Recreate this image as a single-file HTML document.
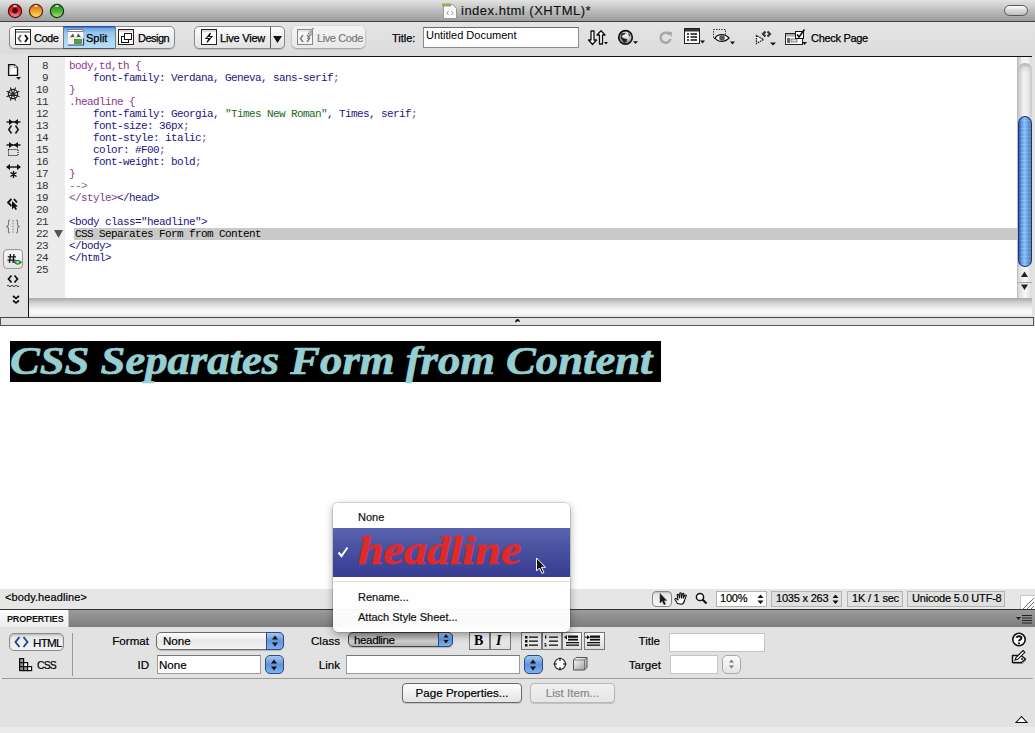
<!DOCTYPE html>
<html><head><meta charset="utf-8">
<style>
*{box-sizing:border-box;margin:0;padding:0}
html,body{width:1035px;height:733px;overflow:hidden;background:#e3e3e3;font-family:"Liberation Sans",sans-serif;font-size:11px;color:#000}
.a{position:absolute}
.pl{font-size:11.6px;line-height:14px;white-space:nowrap;-webkit-text-stroke:0.2px currentColor}
.sel{border:1px solid #6a6a6a;border-radius:5px;background:linear-gradient(#fdfdfd,#e8e8e8 50%,#f4f4f4);box-shadow:0 1px 1px rgba(0,0,0,.2)}
.selb{border:1px solid #2c4a8a;background:linear-gradient(#a8c8f0,#5f95dc 50%,#7eb0ec)}
.inp{background:#fff;border:1px solid #9a9a9a;border-top-color:#777}
.btn{border:1px solid #7a7a7a;background:linear-gradient(#fafafa,#dedede)}
.btn2{border:1px solid #6a6a6a;border-radius:4px;background:linear-gradient(#fff,#f0f0f0 50%,#e4e4e4);box-shadow:0 1px 1px rgba(0,0,0,.15)}
.sbox{white-space:nowrap;height:16px;border:1px solid #b4b4b4;background:#e0e0e0;font-size:11px;line-height:14px;-webkit-text-stroke:0.2px #000;letter-spacing:-0.2px}
#titlebar{left:0;top:0;width:1035px;height:22px;background:linear-gradient(#e2e2e2,#cacaca 35%,#b0b0b0 70%,#9c9c9c);border-bottom:1px solid #404040}
.light{top:4px;width:14px;height:14px;border-radius:50%}
#toolbar{left:0;top:22px;width:1035px;height:34px;background:linear-gradient(#e4e4e4,#dcdcdc)}
#codeframe{left:28px;top:56px;width:1005px;height:261px;border:1px solid #111;border-width:1px 0 0 1px;background:#fff}
.seg{border:1px solid #8a8a8a;border-radius:5px;background:linear-gradient(#fdfdfd,#f0f0f0 45%,#e2e2e2);box-shadow:0 1px 1px rgba(0,0,0,.15)}
.tbt{font-size:11px;line-height:14px;white-space:nowrap;-webkit-text-stroke:0.25px #000}
#leftcol{left:0;top:54px;width:28px;height:263px;background:#e2e2e2}
#gutter{left:29px;top:57px;width:36px;height:241px;background:#ececec}
.p{color:#8b3a8b}.n{color:#1e1480}.g{color:#1a6a1a}.c{color:#777}
.code{font-family:"Liberation Mono",monospace;font-size:11px;letter-spacing:-0.6px;line-height:12px;white-space:pre}
#splitter{left:0;top:317px;width:1034px;height:9px;background:#e2e2e2;border:1px solid #555;border-top-color:#444}
#design{left:0;top:326px;width:1035px;height:263px;background:#fff}
#status{left:0;top:589px;width:1035px;height:21px;background:#e6e6e6;border-bottom:1px solid #333}
#prophdr{left:0;top:610px;width:1035px;height:17px;background:linear-gradient(#9c9c9c,#7c7c7c)}
#props{left:0;top:627px;width:1035px;height:106px;background:#e2e2e2}
</style></head><body>
<div id="titlebar" class="a"></div>
<svg class="a" style="left:7px;top:3px" width="60" height="16"><defs>
<linearGradient id="rg" x1="0" y1="0" x2="0" y2="1"><stop offset="0" stop-color="#d80c14"/><stop offset=".55" stop-color="#e8303a"/><stop offset="1" stop-color="#f89aa0"/></linearGradient>
<linearGradient id="og" x1="0" y1="0" x2="0" y2="1"><stop offset="0" stop-color="#d8600c"/><stop offset=".5" stop-color="#f0a030"/><stop offset="1" stop-color="#fae860"/></linearGradient>
<linearGradient id="gg" x1="0" y1="0" x2="0" y2="1"><stop offset="0" stop-color="#2a8c1c"/><stop offset=".5" stop-color="#4cb03a"/><stop offset="1" stop-color="#b0e080"/></linearGradient>
</defs>
<circle cx="8" cy="8" r="6.6" fill="url(#rg)" stroke="#4a0a0a" stroke-width="1.2"/><circle cx="8" cy="7.6" r="2.8" fill="#3a1616"/><ellipse cx="8" cy="3" rx="2" ry="1" fill="#fff" opacity=".7"/>
<circle cx="29" cy="8" r="6.6" fill="url(#og)" stroke="#5a2a06" stroke-width="1.2"/><ellipse cx="29" cy="3" rx="2" ry="1" fill="#fff" opacity=".7"/>
<circle cx="50" cy="8" r="6.6" fill="url(#gg)" stroke="#0e360e" stroke-width="1.2"/><ellipse cx="50" cy="3" rx="2" ry="1" fill="#fff" opacity=".7"/>
</svg>
<div class="a" style="left:461px;top:2px;font-size:13px;line-height:18px;color:#111;letter-spacing:0.5px;-webkit-text-stroke:0.15px #111">index.html (XHTML)*</div>

<div id="toolbar" class="a"></div>

<!-- segmented view control -->
<div class="a seg" style="left:9px;top:26px;width:166px;height:23px"></div>
<div class="a" style="left:63px;top:26px;width:52px;height:23px;background:linear-gradient(#2a4aa8 0,#2a4aa8 1px,#68a4e4 2px,#94c6ee 30%,#acd8f2 70%,#b4e0f4);border-bottom:1px solid #555"></div>
<svg class="a" style="left:15px;top:29px" width="17" height="17"><rect x="1" y="1" width="15" height="15" fill="#aaa" opacity=".5"/><rect x="0.5" y="0.5" width="15" height="15" fill="#fff" stroke="#222"/><rect x="1" y="1" width="14" height="2" fill="#fff"/><rect x="1" y="2.5" width="14" height="1" fill="#444"/><path d="M6 6L3.5 9.5L6 13" fill="none" stroke="#666" stroke-width="1.9"/><path d="M10 6L12.5 9.5L10 13" fill="none" stroke="#111" stroke-width="1.9"/></svg>
<div class="a tbt" style="left:34px;top:31px;letter-spacing:-0.5px">Code</div>
<svg class="a" style="left:67px;top:29px" width="18" height="17"><rect x="1" y="0.5" width="15" height="15.5" fill="#fff"/><rect x="1" y="0.5" width="15" height="2" fill="#fff" stroke="#666" stroke-width=".8"/><path d="M3 8L6 4.5L7.5 8ZM9.5 8L11 4.5L14 8Z" fill="#555"/><rect x="0" y="8.3" width="17" height="1.2" fill="#e8d8a8"/><rect x="1" y="9.5" width="15" height="6" fill="#f4f4f4"/><rect x="7.5" y="10.5" width="7" height="4" fill="#48a838" stroke="#2a6a20" stroke-width=".6"/><path d="M1 16H16.5V9.5" fill="none" stroke="#2a3a8a" stroke-width="1.2"/></svg>
<div class="a tbt" style="left:86px;top:31px">Split</div>
<svg class="a" style="left:118px;top:29px" width="17" height="17"><rect x="0.5" y="0.5" width="15" height="15" fill="#fff" stroke="#222"/><rect x="1" y="1" width="14" height="2" fill="#ddd"/><rect x="3.5" y="7.5" width="7" height="6" fill="#fff" stroke="#111"/><rect x="6.5" y="4.5" width="7" height="6" fill="#fff" stroke="#111"/></svg>
<div class="a tbt" style="left:138px;top:31px;letter-spacing:-0.5px">Design</div>
<div class="a" style="left:63px;top:27px;width:1px;height:21px;background:#777"></div>
<div class="a" style="left:115px;top:27px;width:1px;height:21px;background:#777"></div>

<!-- live view -->
<div class="a seg" style="left:194px;top:26px;width:91px;height:23px"></div>
<div class="a" style="left:270px;top:27px;width:1px;height:21px;background:#555"></div>
<svg class="a" style="left:201px;top:29px" width="17" height="17"><rect x="0.5" y="0.5" width="15" height="15" fill="#fff" stroke="#222"/><rect x="1" y="1" width="14" height="2" fill="#ddd"/><path d="M9.5 4L5 9.5H8L6 13.5L11 7.5H8Z" fill="none" stroke="#111" stroke-width="1.1"/></svg>
<div class="a tbt" style="left:220px;top:31px;letter-spacing:-0.2px">Live View</div>
<svg class="a" style="left:273px;top:36px" width="9" height="7"><path d="M0 0H9L4.5 7Z" fill="#111"/></svg>
<!-- live code disabled -->
<div class="a" style="left:292px;top:26px;width:73px;height:22px;border-radius:5px;background:linear-gradient(#f4f4f4,#e8e8e8);box-shadow:0 1px 2px rgba(0,0,0,.3),0 0 1px rgba(0,0,0,.2)"></div>
<svg class="a" style="left:297px;top:28px" width="20" height="18" opacity="0.5"><rect x="0.5" y="1.5" width="15" height="15" fill="#fff" stroke="#222"/><rect x="1" y="2" width="14" height="2" fill="#ddd"/><path d="M6 7L3.5 10.5L6 14M10 7L12.5 10.5L10 14" fill="none" stroke="#111" stroke-width="1.5"/><path d="M15 0.5L11 6H13.5L10.5 11L16 5H13.5L16.5 0.5Z" fill="#fff" stroke="#111" stroke-width=".9"/></svg>
<div class="a tbt" style="left:317px;top:31px;color:#7a7a7a;-webkit-text-stroke:0.2px #7a7a7a;letter-spacing:-0.4px">Live Code</div>

<div class="a tbt" style="left:392px;top:31px">Title:</div>
<div class="a" style="left:423px;top:27px;width:156px;height:21px;background:#fff;border:1px solid #8c8c8c;border-top-color:#6a6a6a"></div>
<div class="a" style="left:426px;top:28px;font-size:11px;line-height:14px">Untitled Document</div>
<div class="a tbt" style="left:811px;top:31px;letter-spacing:-0.3px">Check Page</div>

<!-- toolbar icons -->
<svg class="a" style="left:587px;top:30px" width="22" height="16"><path d="M4 1V10H1.5L5.5 14.5L9.5 10H7V1Z" fill="#fff" stroke="#111" stroke-width="1.3" stroke-linejoin="round"/><path d="M12.5 14V5H10L14 0.8L18 5H15.5V14Z" fill="#fff" stroke="#111" stroke-width="1.3" stroke-linejoin="round"/><path d="M17 12H21L19 14.5Z" fill="#111"/></svg>
<svg class="a" style="left:617px;top:29px" width="23" height="18"><defs><radialGradient id="gl" cx="55%" cy="35%" r="65%"><stop offset="0" stop-color="#fff"/><stop offset=".6" stop-color="#bbb"/><stop offset="1" stop-color="#666"/></radialGradient></defs><circle cx="8.5" cy="8.4" r="6.8" fill="url(#gl)" stroke="#111" stroke-width="1.6"/><path d="M4 4.5L9 3.8L7.5 5.5L5.5 6L4.5 8L7 9.5L10 10L9.5 13L7 14L5.5 11.5L3.5 9Z" fill="#222"/><path d="M11 4L13.5 5.5L12.5 8L11.5 6Z" fill="#555"/><path d="M16 12.2H21L18.5 15Z" fill="#111"/></svg>
<svg class="a" style="left:658px;top:30px" width="16" height="15"><path d="M11.5 4.5A5 5 0 1 0 12.5 9" fill="none" stroke="#a8a8a8" stroke-width="2.6"/><path d="M9 1.5L14 2L13.5 7Z" fill="#a8a8a8"/></svg>
<svg class="a" style="left:684px;top:28px" width="22" height="17"><rect x="0.5" y="0.5" width="15" height="15" fill="#fff" stroke="#222"/><rect x="1" y="1" width="14" height="2.5" fill="#333"/><path d="M3 6H5M3 9H5M3 12H5M6.5 6H13M6.5 9H13M6.5 12H13" stroke="#111" stroke-width="1.4"/><path d="M16 12.5H21L18.5 15.5Z" fill="#111"/></svg>
<svg class="a" style="left:713px;top:29px" width="23" height="17"><rect x="0.5" y="0.5" width="12" height="9" fill="none" stroke="#222" stroke-dasharray="1.3 1.3"/><path d="M2 9C5 4.5 12 4.5 16 9C12 13.5 5 13.5 2 9Z" fill="#fff" stroke="#111" stroke-width="1.3"/><circle cx="9" cy="9" r="2.8" fill="#555"/><path d="M17 12.5H22L19.5 15.5Z" fill="#111"/></svg>
<svg class="a" style="left:755px;top:30px" width="22" height="17"><path d="M1.5 5.5V13.5L8.5 9.5Z" fill="#f4f4f4" stroke="#222" stroke-width="1.3" stroke-dasharray="1.6 .8"/><path d="M10.5 1.5L8 4L10.5 6.5M12.5 1.5L15 4L12.5 6.5" fill="none" stroke="#333" stroke-width="2.1"/><path d="M15 12.5H21L18 15.5Z" fill="#111"/></svg>
<svg class="a" style="left:785px;top:29px" width="23" height="17"><rect x="0.5" y="4.5" width="17" height="11" fill="#fff" stroke="#222"/><rect x="1" y="5" width="16" height="2.5" fill="#aaa"/><rect x="2" y="9" width="3" height="5" fill="#666"/><rect x="6" y="10" width="6" height="3" fill="#ddd" stroke="#444" stroke-width=".6"/><rect x="10.5" y="2.5" width="8" height="7" fill="#fff" stroke="#111"/><path d="M12 5.5L14 8L19.5 0.5" fill="none" stroke="#111" stroke-width="1.6"/><path d="M17 13H22L19.5 16Z" fill="#111"/></svg>
<!-- title bar widget -->
<div class="a" style="left:1004px;top:5px;width:24px;height:11px;border-radius:6px;border:1.5px solid #555;background:linear-gradient(#ffffff,#d8d8d8 50%,#bdbdbd)"></div>
<!-- doc icon in title -->
<svg class="a" style="left:442px;top:2px" width="16" height="17"><path d="M1.5 2.5H10.5L14.5 6.5V16.5H1.5Z" fill="#fafafa" stroke="#999"/><rect x="0" y="1.5" width="9" height="3" fill="#8fb060"/><path d="M6.5 9L5 11L6.5 13M9.5 9L11 11L9.5 13" fill="none" stroke="#999"/></svg>
<div id="leftcol" class="a"></div>
<div id="codeframe" class="a"></div>
<div id="gutter" class="a"></div>

<div class="a" style="left:74px;top:228px;width:943px;height:12px;background:#c9c9c9"></div>
<div class="a code" style="left:28px;top:60px;width:20px;text-align:right;color:#333">8
9
10
11
12
13
14
15
16
17
18
19
20
21
22
23
24
25</div>
<div class="a code" style="left:69px;top:60px;color:#000"><span class="p">body,td,th {</span>
    <span class="n">font-family: Verdana, Geneva, sans-serif</span><span class="p">;</span>
<span class="p">}</span>
<span class="p">.headline {</span>
    <span class="n">font-family: Georgia, </span><span class="g">"Times New Roman"</span><span class="n">, Times, serif</span><span class="p">;</span>
    <span class="n">font-size: 36px</span><span class="p">;</span>
    <span class="n">font-style: italic</span><span class="p">;</span>
    <span class="n">color: #F00</span><span class="p">;</span>
    <span class="n">font-weight: bold</span><span class="p">;</span>
<span class="p">}</span>
<span class="c">--&gt;</span>
<span class="p">&lt;/style&gt;</span><span class="n">&lt;/head&gt;</span>

<span class="n">&lt;body class="headline"&gt;</span>
 CSS Separates Form from Content
<span class="n">&lt;/body&gt;</span>
<span class="n">&lt;/html&gt;</span>
</div>
<svg class="a" style="left:54px;top:230px" width="9" height="8"><path d="M0 0H9L4.5 8Z" fill="#555"/></svg>

<!-- left column icons -->
<svg class="a" style="left:7px;top:63px" width="16" height="18"><defs><linearGradient id="dg" x1="0" y1="0" x2="1" y2="1"><stop offset="0" stop-color="#bbb"/><stop offset=".5" stop-color="#fff"/></linearGradient></defs><path d="M1.6 1.6H7.5L10.5 4.6V12.4H1.6Z" fill="url(#dg)" stroke="#111" stroke-width="1.3"/><path d="M7.5 1.6L10.5 4.6H7.5Z" fill="#fff" stroke="#333" stroke-width=".6"/><path d="M9 14H14L11.5 16.8Z" fill="#111"/></svg>
<svg class="a" style="left:5px;top:86px" width="16" height="16"><circle cx="8" cy="8" r="4.6" fill="#f4f4f4" stroke="#222" stroke-width="1.3"/><path d="M8 8L14.47 10.68M8 8L10.68 14.47M8 8L5.32 14.47M8 8L1.53 10.68M8 8L1.53 5.32M8 8L5.32 1.53M8 8L10.68 1.53M8 8L14.47 5.32" stroke="#222" stroke-width="1.1"/><circle cx="8" cy="8" r="1.6" fill="#333"/></svg>
<svg class="a" style="left:6px;top:119px" width="15" height="16"><path d="M0.5 3H14.5" stroke="#111" stroke-width="1.4"/><path d="M3 0L7.3 3L3 6ZM12 0L7.7 3L12 6Z" fill="#111"/><path d="M5.5 6.5L2.8 10.5L5.5 14.5M9.5 6.5L12.2 10.5L9.5 14.5" fill="none" stroke="#222" stroke-width="1.7"/></svg>
<svg class="a" style="left:6px;top:142px" width="15" height="15"><path d="M0.5 3H14.5" stroke="#111" stroke-width="1.4"/><path d="M3 0L7.3 3L3 6ZM12 0L7.7 3L12 6Z" fill="#111"/><rect x="2.5" y="7.5" width="9.5" height="6" fill="none" stroke="#111" stroke-width="1.1" stroke-dasharray="1.1 .9"/></svg>
<svg class="a" style="left:6px;top:164px" width="15" height="14"><path d="M1 3H14" stroke="#111" stroke-width="1.4"/><path d="M0 3L4 0V6ZM15 3L11 0V6Z" fill="#111"/><path d="M7.5 7V14M4.5 8.5L10.5 12.5M10.5 8.5L4.5 12.5" stroke="#111" stroke-width="1.4"/></svg>
<svg class="a" style="left:7px;top:198px" width="12" height="12"><path d="M4.5 1L1 4.5L4.5 8M7 1L10 4.5" fill="none" stroke="#111" stroke-width="1.8"/><path d="M5 3L5 11.5L7 9.5L8.5 12L10 11.3L8.5 8.8L11 8.5Z" fill="#111"/></svg>
<svg class="a" style="left:6px;top:219px" width="14" height="15"><path d="M4 1C2 1 2.5 3 2.5 5C2.5 6.5 1.5 7.3 0.8 7.5C1.5 7.7 2.5 8.5 2.5 10C2.5 12 2 14 4 14M10 1C12 1 11.5 3 11.5 5C11.5 6.5 12.5 7.3 13.2 7.5C12.5 7.7 11.5 8.5 11.5 10C11.5 12 12 14 10 14" fill="none" stroke="#777" stroke-width="1.1"/><path d="M7 1V14" stroke="#888" stroke-width="1.1" stroke-dasharray="1.5 1.3"/></svg>
<div class="a" style="left:3px;top:249px;width:20px;height:20px;border-radius:4px;border:1px solid #9a9a9a;background:linear-gradient(#f8f8f8,#e4e4e4);box-shadow:inset 0 1px 1px rgba(0,0,0,.08)"></div>
<svg class="a" style="left:7px;top:253px" width="16" height="13"><path d="M3.5 1L2.5 10M7 1L6 10M0.8 3.8H9M0.5 7.2H8.5" stroke="#111" stroke-width="1.3"/><path d="M7 9.3Q10.5 5.5 14.5 9.3Q10.5 13 7 9.3Z" fill="#2db84c" stroke="#1d4a2a" stroke-width=".9"/><circle cx="10.7" cy="9.3" r="1.3" fill="#9fe0a8"/></svg>
<svg class="a" style="left:7px;top:275px" width="12" height="13"><path d="M4.5 0.5L1.5 4L4.5 7.5M7.5 0.5L10.5 4L7.5 7.5" fill="none" stroke="#111" stroke-width="1.7"/><path d="M0 11Q1 9.5 2 11T4 11T6 11T8 11T10 11T12 11" fill="none" stroke="#222" stroke-width=".9"/></svg>
<svg class="a" style="left:12px;top:295px" width="8" height="10"><path d="M1 1L4 3.5L7 1M1 5.5L4 8L7 5.5" fill="none" stroke="#111" stroke-width="1.7"/></svg>

<!-- vertical scrollbar -->
<div class="a" style="left:1017px;top:57px;width:15px;height:241px;background:linear-gradient(90deg,#c8c8c8,#f2f2f2 30%,#f8f8f8 60%,#dcdcdc);border-left:1px solid #bcbcbc"></div>
<div class="a" style="left:1018px;top:63px;width:14px;height:54px;border-radius:7px 7px 0 0;background:linear-gradient(rgba(120,120,120,.55),rgba(160,160,160,.2) 5px,rgba(0,0,0,0) 10px),linear-gradient(90deg,#c4c4c4,#f2f2f2 40%,#ececec 70%,#c8c8c8)"></div>
<div class="a" style="left:1018px;top:116px;width:14px;height:151px;border-radius:7px;border:1px solid #232f8a;border-right:1.5px solid #333;background:repeating-linear-gradient(rgba(255,255,255,0) 0 3px,rgba(255,255,255,.12) 3px 4px),linear-gradient(90deg,#3550b0,#5a96dc 20%,#8cc0f0 45%,#6aaae8 65%,#4c86d0 90%)"></div>
<div class="a" style="left:1018px;top:267px;width:14px;height:31px;background:linear-gradient(90deg,#d8d8d8,#f8f8f8 50%,#dcdcdc)"></div>
<div class="a" style="left:1018px;top:282px;width:14px;height:1px;background:#a8a8a8"></div>
<svg class="a" style="left:1020px;top:271px" width="9" height="26"><path d="M4.5 0.5L8 6H1Z M1 13.5H8L4.5 19Z" fill="#222"/></svg>
<!-- horizontal scrollbar track -->
<div class="a" style="left:29px;top:298px;width:1003px;height:19px;background:linear-gradient(#a9a9a9,#d2d2d2 25%,#f4f4f4 60%,#f8f8f8 80%,#e4e4e4)"></div>
<div class="a" style="left:1032px;top:56px;width:3px;height:261px;background:#e3e3e3"></div>
<div id="splitter" class="a"></div>
<div id="design" class="a"></div>
<div id="status" class="a"></div>
<div id="prophdr" class="a"></div>
<div id="props" class="a"></div>

<div class="a" style="left:10px;top:341px;width:651px;height:41px;background:#000"></div>

<div class="a" style="left:10px;top:339px;font-family:'Liberation Serif',serif;font-weight:bold;font-style:italic;font-size:40px;line-height:44px;color:#96cfd2;-webkit-text-stroke:0.7px #96cfd2;white-space:nowrap;transform:scaleX(1.116);transform-origin:0 0" id="hl">CSS Separates Form from Content</div>
<svg class="a" style="left:514px;top:318px" width="7" height="6"><path d="M1 4.5Q1.5 1 3.5 1Q5.5 1 6 4L4.5 3.5Q3.5 3 2.5 4Z" fill="#111"/><circle cx="3.8" cy="4.8" r="1" fill="#fff"/></svg>

<!-- status bar marker -->
<div class="a" style="left:5px;top:590px;font-size:11px;line-height:14px;letter-spacing:0.1px;-webkit-text-stroke:0.2px #000">&lt;body.headline&gt;</div>
<div class="a" style="left:652px;top:591px;width:20px;height:16px;border-radius:4px;border:1px solid #8a8a8a;background:linear-gradient(#dedede,#efefef 50%,#f2f2f2);box-shadow:inset 0 1px 1px rgba(0,0,0,.15)"></div>
<svg class="a" style="left:659px;top:593px" width="9" height="13"><path d="M1 0.5V10L3.2 8L5 11.8L6.6 11L4.9 7.4H7.8Z" fill="#1a1a1a" stroke="#333" stroke-width=".5"/></svg>
<svg class="a" style="left:674px;top:592px" width="15" height="13"><path d="M3.5 11.5L1 7.5C0.6 6.8 1.5 6 2.3 6.6L4 8L3.2 3.2C3 2.3 4.3 2 4.6 2.9L5.6 6L5.8 1.5C5.8 0.6 7.2 0.6 7.2 1.5L7.4 6L8.6 1.8C8.9 1 10.1 1.3 9.9 2.2L9.2 6.3L11 3.3C11.5 2.6 12.6 3.1 12.2 3.9L10.5 8.5C10 10.5 9 12 7.5 12.3Z" fill="#fff" stroke="#111" stroke-width="1.1" stroke-linejoin="round"/></svg>
<svg class="a" style="left:695px;top:592px" width="13" height="13"><circle cx="5" cy="5" r="3.6" fill="#fff" stroke="#111" stroke-width="1.5"/><path d="M7.5 7.5L11.5 11.5" stroke="#111" stroke-width="2.2"/></svg>
<div class="a sbox" style="left:716px;top:591px;width:51px;background:#fff"><span style="position:absolute;left:3px;top:-1px">100%</span></div>
<svg class="a" style="left:757px;top:594px" width="7" height="11"><path d="M3.5 0.5L6.5 4H0.5ZM0.5 6.5H6.5L3.5 10Z" fill="#111"/></svg>
<div class="a sbox" style="left:771px;top:591px;width:71px"><span style="position:absolute;left:4px;top:-1px">1035 x 263</span></div>
<svg class="a" style="left:832px;top:594px" width="7" height="11"><path d="M3.5 0.5L6.5 4H0.5ZM0.5 6.5H6.5L3.5 10Z" fill="#111"/></svg>
<div class="a sbox" style="left:847px;top:591px;width:56px"><span style="position:absolute;left:4px;top:-1px">1K / 1 sec</span></div>
<div class="a sbox" style="left:907px;top:591px;width:98px"><span style="position:absolute;left:4px;top:-1px">Unicode 5.0 UTF-8</span></div>
<div class="a" style="left:1020px;top:595px;width:15px;height:14px;background:#fff;border-left:1px solid #c8c8c8;border-top:1px solid #c8c8c8"></div>
<svg class="a" style="left:1021px;top:596px" width="14" height="13"><path d="M13 2L2 13M13 6L6 13M13 10L10 13" stroke="#777" stroke-width="1"/></svg>

<!-- properties header -->
<div class="a" style="left:0;top:610px;width:69px;height:17px;background:linear-gradient(#fdfdfd,#ececec);border-right:1px solid #bdbdbd"></div>
<div class="a" style="left:7px;top:613px;font-size:9px;font-weight:bold;line-height:13px;color:#111;letter-spacing:-0.15px">PROPERTIES</div>
<svg class="a" style="left:1015px;top:614px" width="18" height="10"><path d="M1 3H6L3.5 6Z" fill="#222"/><path d="M7 1.5H17M7 4H17M7 6.5H17M7 9H17" stroke="#222" stroke-width="1.2"/></svg>

<!-- properties panel -->
<div class="a" style="left:9px;top:633px;width:55px;height:18px;border-radius:5px;border:1px solid #8a8a8a;background:linear-gradient(#dcdcdc,#eeeeee 40%,#f2f2f2);box-shadow:inset 0 1px 2px rgba(0,0,0,.18)"></div>
<svg class="a" style="left:14px;top:636px" width="16" height="13"><path d="M5.5 1L1.5 6L5.5 11M9.5 1L13.5 6L9.5 11" fill="none" stroke="#1d4a94" stroke-width="1.9"/></svg>
<div class="a pl" style="left:33px;top:636px;letter-spacing:-0.7px">HTML</div>
<svg class="a" style="left:19px;top:658px" width="14" height="14"><g stroke="#111" stroke-width="1.2"><rect x="0.6" y="0.6" width="4" height="4" fill="#999"/><rect x="0.6" y="4.6" width="4" height="4" fill="#888"/><rect x="0.6" y="8.6" width="4" height="4" fill="#888"/><rect x="4.6" y="4.6" width="4" height="4" fill="#fff"/><rect x="4.6" y="8.6" width="4" height="4" fill="#999"/><rect x="8.6" y="8.6" width="4" height="4" fill="#fff"/></g></svg>
<div class="a pl" style="left:37px;top:658px;font-size:10.5px;letter-spacing:-0.9px">CSS</div>
<div class="a" style="left:72px;top:633px;width:1px;height:43px;background:#9a9a9a"></div>
<div class="a" style="left:2px;top:678px;width:1031px;height:1px;background:#9c9c9c"></div>

<div class="a pl" style="left:109px;top:634px;width:40px;text-align:right">Format</div>
<div class="a pl" style="left:109px;top:658px;width:40px;text-align:right">ID</div>
<div class="a sel" style="left:156px;top:632px;width:128px;height:18px"></div>
<div class="a pl" style="left:163px;top:634px">None</div>
<div class="a selb" style="left:266px;top:632px;width:18px;height:18px;border-radius:0 5px 5px 0"></div>
<div class="a inp" style="left:157px;top:655px;width:104px;height:19px"></div>
<div class="a pl" style="left:159px;top:658px">None</div>
<div class="a selb" style="left:265px;top:655px;width:19px;height:19px;border-radius:5px"></div>

<div class="a pl" style="left:300px;top:634px;width:40px;text-align:right">Class</div>
<div class="a pl" style="left:300px;top:658px;width:40px;text-align:right">Link</div>
<div class="a sel" style="left:348px;top:632px;width:105px;height:15px;background:linear-gradient(#a4a4a4,#c0c0c0 45%,#d2d2d2 60%,#b4b4b4);border-color:#444"></div>
<div class="a pl" style="left:354px;top:633px;letter-spacing:-0.4px">headline</div>
<div class="a selb" style="left:438px;top:632px;width:15px;height:15px;border-radius:0 5px 5px 0"></div>
<div class="a inp" style="left:346px;top:655px;width:174px;height:19px"></div>
<div class="a selb" style="left:524px;top:655px;width:19px;height:19px;border-radius:5px"></div>
<svg class="a" style="left:553px;top:657px" width="14" height="14"><circle cx="7" cy="7" r="5.5" fill="#fff" stroke="#111" stroke-width="1.1"/><path d="M7 0.5V4M7 10V13.5M0.5 7H4M10 7H13.5" stroke="#111" stroke-width="1.1"/></svg>
<svg class="a" style="left:572px;top:656px" width="17" height="15"><defs><linearGradient id="fg" x1="0" y1="0" x2="1" y2="1"><stop offset="0" stop-color="#fff"/><stop offset="1" stop-color="#999"/></linearGradient></defs><path d="M1.5 4L4 1.5H15V11.5L12.5 14H1.5Z" fill="url(#fg)" stroke="#555"/><path d="M1.5 4H12.5V14M12.5 4L15 1.5" fill="none" stroke="#666" stroke-width=".8"/></svg>

<div class="a btn" style="left:469px;top:632px;width:21px;height:18px"></div>
<div class="a btn" style="left:490px;top:632px;width:21px;height:18px"></div>
<div class="a" style="left:474px;top:633px;font-family:'Liberation Serif',serif;font-weight:bold;font-size:14px;line-height:16px">B</div>
<div class="a" style="left:496px;top:633px;font-family:'Liberation Serif',serif;font-weight:bold;font-style:italic;font-size:14px;line-height:16px">I</div>
<div class="a btn" style="left:521px;top:632px;width:21px;height:18px"></div>
<div class="a btn" style="left:542px;top:632px;width:20px;height:18px"></div>
<div class="a btn" style="left:562px;top:632px;width:20px;height:18px"></div>
<div class="a btn" style="left:584px;top:632px;width:21px;height:18px"></div>
<svg class="a" style="left:521px;top:632px" width="84" height="18"><g fill="#111">
<rect x="4" y="4" width="2.5" height="2.5"/><rect x="4" y="8" width="2.5" height="2.5"/><rect x="4" y="12" width="2.5" height="2.5"/><rect x="8" y="4.5" width="9" height="1.3"/><rect x="8" y="8.5" width="9" height="1.3"/><rect x="8" y="12.5" width="9" height="1.3"/>
<rect x="28" y="4.5" width="9" height="1.3"/><rect x="28" y="8.5" width="9" height="1.3"/><rect x="28" y="12.5" width="9" height="1.3"/><path d="M24 3.5H25.3V6.5H24ZM23.5 11H25.5L24 12.5H25.5V14.5H23.5V13.5L24.8 12.5H23.5Z"/>
<rect x="47" y="3.5" width="10" height="2.3"/><rect x="47" y="6.8" width="10" height="1.8"/><rect x="45" y="10" width="13" height="1.3"/><rect x="45" y="12.5" width="13" height="1.3"/><path d="M43 5.2L46 3V7.4Z"/>
<rect x="69" y="3.5" width="10" height="2.3"/><rect x="69" y="6.8" width="10" height="1.8"/><rect x="66" y="10" width="13" height="1.3"/><rect x="66" y="12.5" width="13" height="1.3"/><path d="M69 5.2L66 3V7.4Z"/><rect x="64" y="4.7" width="3" height="1"/>
</g></svg>

<div class="a pl" style="left:620px;top:634px;width:40px;text-align:right">Title</div>
<div class="a pl" style="left:620px;top:658px;width:41px;text-align:right">Target</div>
<div class="a inp" style="left:669px;top:633px;width:96px;height:19px;border-color:#c4c4c4"></div>
<div class="a inp" style="left:670px;top:655px;width:48px;height:19px;border-color:#c4c4c4"></div>
<div class="a" style="left:722px;top:655px;width:19px;height:19px;border-radius:5px;border:1px solid #a8a8a8;background:linear-gradient(#fafafa,#e4e4e4)"></div>
<svg class="a" style="left:728px;top:659px" width="7" height="11"><path d="M3.5 0.5L6 3.5H1ZM1 6.5H6L3.5 9.5Z" fill="#777"/></svg>
<svg class="a" style="left:1011px;top:632px" width="16" height="16"><circle cx="8" cy="7.5" r="6.2" fill="#fff" stroke="#111" stroke-width="1.6"/><path d="M5.6 5.8C5.6 3.6 10.4 3.6 10.4 6C10.4 7.6 8 7.6 8 9.3" fill="none" stroke="#111" stroke-width="2"/><circle cx="8" cy="11.3" r="1.1" fill="#111"/></svg>
<svg class="a" style="left:1011px;top:649px" width="17" height="16"><path d="M1.5 6.5H10L14.5 10L10.5 13.5H1.5Z" fill="#fff" stroke="#111" stroke-width="1.5" stroke-linejoin="round"/><path d="M2.5 14.5H11L15 11" fill="none" stroke="#777" stroke-width="1"/><circle cx="11" cy="10" r="1" fill="#111"/><path d="M4 11L5 8.5L12 1.5L13.8 3.3L6.8 10.3Z" fill="#fff" stroke="#111" stroke-width="1.2"/></svg>

<div class="a btn2" style="left:402px;top:683px;width:120px;height:20px"></div>
<div class="a pl" style="left:402px;top:686px;width:120px;text-align:center">Page Properties...</div>
<div class="a btn2" style="left:530px;top:683px;width:85px;height:20px;border-color:#b8b8b8;background:linear-gradient(#f0f0f0,#e6e6e6)"></div>
<div class="a pl" style="left:530px;top:686px;width:85px;text-align:center;color:#8a8a8a">List Item...</div>
<div class="a" style="left:0;top:727px;width:1035px;height:6px;background:#ececec"></div>
<svg class="a" style="left:1015px;top:715px" width="13" height="9"><path d="M1 7.5H12L6.5 1.5Z" fill="#fff" stroke="#111" stroke-width="1.1"/></svg>

<svg class="a" style="left:271px;top:635px" width="8" height="12"><path d="M4 0.5L7 4.5H1ZM1 7.5H7L4 11.5Z" fill="#111"/></svg>
<svg class="a" style="left:270px;top:659px" width="8" height="12"><path d="M4 0.5L7 4.5H1ZM1 7.5H7L4 11.5Z" fill="#111"/></svg>
<svg class="a" style="left:442px;top:633px" width="8" height="12"><path d="M4 1L6.5 4.5H1.5ZM1.5 7H6.5L4 10.5Z" fill="#111"/></svg>
<svg class="a" style="left:529px;top:659px" width="8" height="12"><path d="M4 0.5L7 4.5H1ZM1 7.5H7L4 11.5Z" fill="#111"/></svg>

<!-- popup menu -->
<div class="a" style="left:333px;top:503px;width:237px;height:129px;border-radius:5px;background:rgba(255,255,255,.96);box-shadow:0 3px 9px rgba(0,0,0,.35),0 0 0 .5px rgba(0,0,0,.25)"></div>
<div class="a" style="left:333px;top:528px;width:237px;height:49px;background:linear-gradient(#5a64ae,#4a52a2 40%,#363c92)"></div>
<div class="a" style="left:334px;top:581px;width:235px;height:1px;background:#dcdcdc"></div>
<div class="a" style="left:358px;top:510px;font-size:11px;line-height:14px;color:#111;-webkit-text-stroke:0.2px #111">None</div>
<div class="a" style="left:358px;top:590px;font-size:11px;line-height:14px;color:#111;-webkit-text-stroke:0.2px #111">Rename...</div>
<div class="a" style="left:358px;top:610px;font-size:11px;line-height:14px;color:#111;-webkit-text-stroke:0.2px #111">Attach Style Sheet...</div>
<svg class="a" style="left:337px;top:546px" width="12" height="12"><path d="M1.5 6.5L4.5 10L10.5 1.5" fill="none" stroke="#fff" stroke-width="2"/></svg>
<div class="a" style="left:358px;top:529px;font-family:'Liberation Serif',serif;font-weight:bold;font-style:italic;font-size:40px;line-height:44px;color:#e02a2a;-webkit-text-stroke:0.7px #e02a2a;white-space:nowrap;transform:scaleX(1.148);transform-origin:0 0" id="hl2">headline</div>
<svg class="a" style="left:535px;top:557px" width="12" height="18"><path d="M1.5 1V14L4.5 11L7 16.5L9 15.5L6.5 10.3H10.5Z" fill="#111" stroke="#fff" stroke-width="1"/></svg>
</body></html>
